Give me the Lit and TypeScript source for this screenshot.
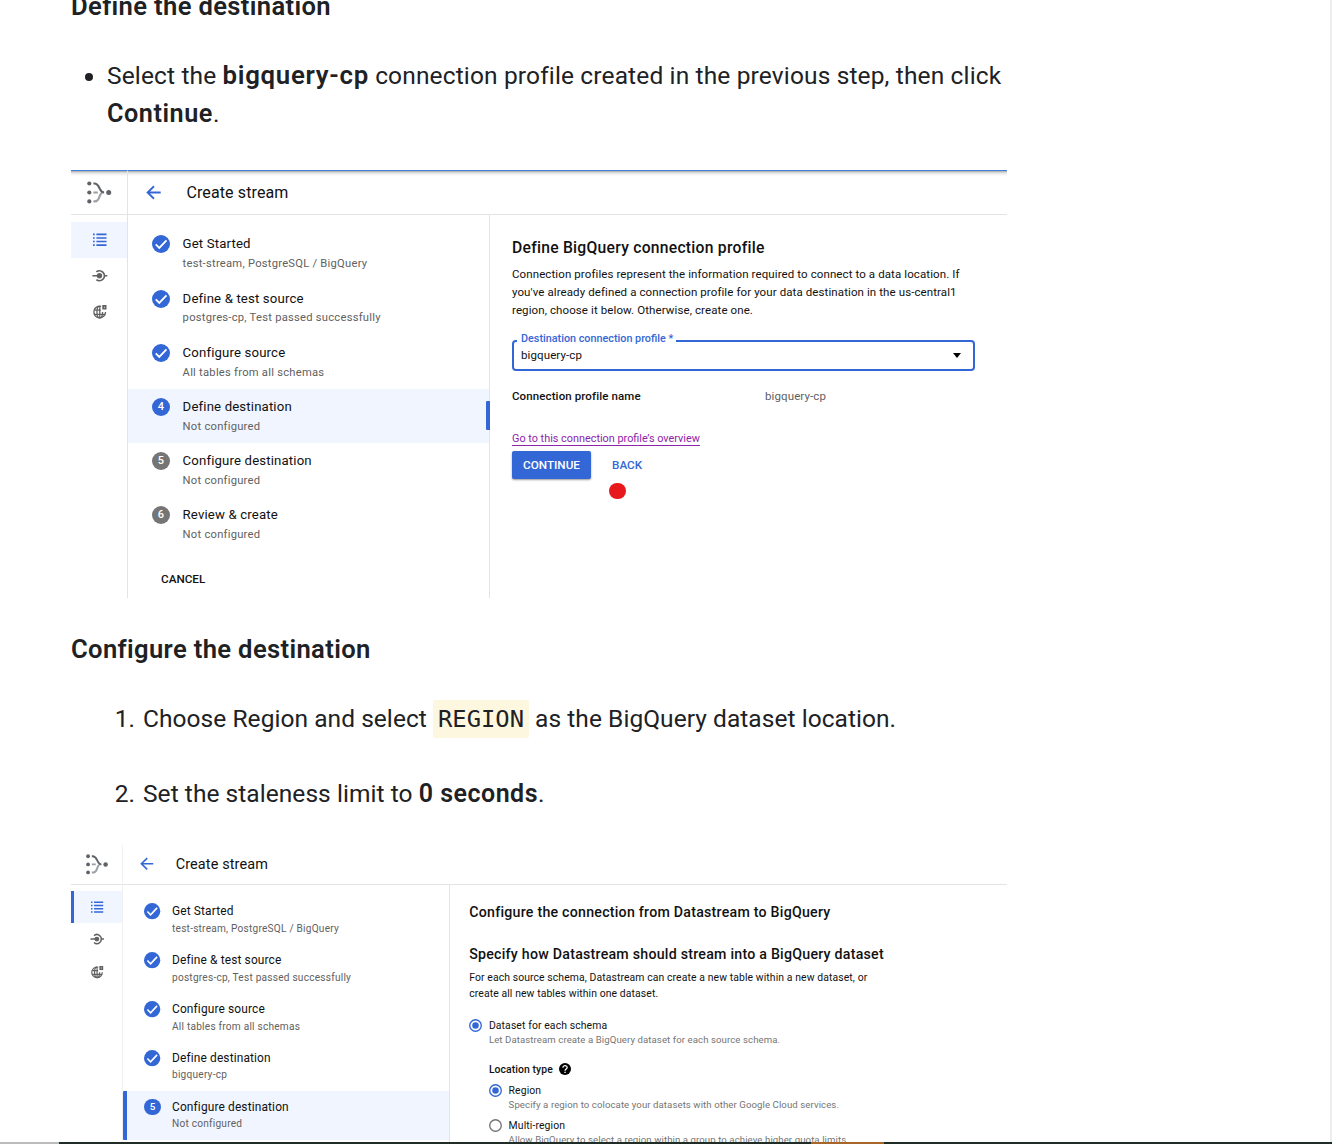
import { LitElement, html, css, svg, nothing } from "lit";
import { customElement, property } from "lit/decorators.js";
import { classMap } from "lit/directives/class-map.js";

interface Step {
  title: string;
  note: string;
  state: "done" | "active" | "todo";
}

@customElement("stream-icon")
class StreamIcon extends LitElement {
  @property() name = "";

  static styles = css`
    :host {
      display: block;
      line-height: 0;
    }
    .icon {
      display: block;
      width: 100%;
      height: 100%;
      overflow: visible;
    }
  `;

  private shape() {
    switch (this.name) {
      case "logo":
        return svg`
          <g fill="#5f6368">
            <circle cx="2.3" cy="2.5" r="2.1"/><circle cx="2.3" cy="11.5" r="2.1"/><circle cx="2.3" cy="20.4" r="2.1"/>
            <circle cx="21.7" cy="11.5" r="2.5"/>
          </g>
          <g fill="none" stroke-width="2.1">
            <path stroke="#9aa0a6" d="M6.4 20.4H8c3.4 0 4-3.4 5-6.2c.5-1.3 1-2.2 2.4-2.2M6.4 11.500h4.400"/>
            <path stroke="#5f6368" d="M6.400 2.500h1c3.600 0 4.400 3.500 5.800 6c.9 1.800 1.700 3 3.900 3"/>
          </g>`;
      case "back":
        return svg`<path fill="none" stroke="#3367d6" stroke-width="2.900" d="M23.500 12H2.500M12.800 2L2.500 12l10.300 10"/>`;
      case "list":
        return svg`<g fill="#3367d6">
          <path d="M0 1h3v2.800H0zM0 7.400h3v2.800H0zM0 13.800h3v2.800H0zM0 20.200h3V23H0zM6 1h18v2.800H6zM6 7.400h18v2.800H6zM6 13.800h18v2.800H6zM6 20.200h18V23H6z"/></g>`;
      case "plug":
        return svg`<g fill="none" stroke="#616161" stroke-width="3">
          <path d="M-1 12h10M20 12h5.500"/><path d="M6 5.200C9 2.400 14 2.400 17.400 5.400C21.400 9 21.400 15 17.400 18.600C14 21.600 9 21.600 6 18.800"/></g>
          <circle cx="11.500" cy="12" r="4.800" fill="#616161"/>`;
      case "globe":
        return svg`<g fill="none" stroke="#616161" stroke-width="2.300">
          <path d="M14.500 2.400A10.400 10.400 0 1 0 22.300 12.500"/>
          <path d="M12 2C9 2 7 6.500 7 12.500s2 10.500 5 10.500s5-4.500 5-10.500M2.300 9H14M2.300 16.500h19.500M12 2v21"/></g>
          <path fill="#616161" d="M16.500 0H24v8h-7.500z"/><path fill="#fff" d="M19.500 3h1.500v2h-1.500z"/>`;
      case "check":
        return svg`<circle cx="12" cy="12" r="12" fill="#3367d6"/>
          <path fill="none" stroke="#fff" stroke-width="2.400" d="M5 12.600l4.700 4.700L19.300 7.200"/>`;
      case "radio-on":
        return svg`<circle cx="12" cy="12" r="10.700" fill="none" stroke="#3367d6" stroke-width="2.500"/>
          <circle cx="12" cy="12" r="6" fill="#3367d6"/>`;
      case "radio-off":
        return svg`<circle cx="12" cy="12" r="10.700" fill="none" stroke="#757575" stroke-width="2.500"/>`;
      case "help":
        return svg`<circle cx="12" cy="12" r="12" fill="#000"/>
          <path fill="none" stroke="#fff" stroke-width="2.600" d="M7.800 9.400C7.800 3.800 16.400 4 16.300 9.200C16.200 12 12.100 12.300 12.100 15.600"/>
          <path fill="#fff" d="M10.700 17.400h2.800v2.700h-2.800z"/>`;
      default:
        return nothing;
    }
  }

  render() {
    const box = this.name === "logo" ? "0 0 25 23" : "0 0 24 24";
    return html`<svg class="icon" viewBox=${box}>${this.shape()}</svg>`;
  }
}

@customElement("stream-console")
class StreamConsole extends LitElement {
  @property({ type: Boolean, reflect: true }) compact = false;
  @property({ attribute: false }) steps: Step[] = [];

  static styles = css`
    :host {
      --u: 1px;
      display: grid;
      grid-template-columns: 57px minmax(0, 1fr);
      grid-template-rows: calc(44.500 * var(--u)) minmax(0, 1fr);
      font-family: Roboto, sans-serif;
      color: #111;
      background: #fff;
      overflow: hidden;
    }
    :host([compact]) {
      --u: 0.904px;
      grid-template-columns: 52px minmax(0, 1fr);
    }
    .corner,
    .bar {
      display: flex;
      align-items: center;
      border-bottom: 1px solid #e4e4e4;
      box-sizing: border-box;
    }
    .corner {
      padding-left: calc(16 * var(--u));
      border-right: 1px solid #e4e4e4;
    }
    :host([compact]) .corner {
      padding-left: 15.300px;
      border-right-color: #f1f1f1;
    }
    :host(:not([compact])) .corner,
    :host(:not([compact])) .bar {
      border-top: 1px solid #3f80d8;
      background: linear-gradient(#a8a8a8, #e6e6e6 2px, #fff 5px);
    }
    .logo {
      width: calc(25 * var(--u));
      height: calc(23 * var(--u));
    }
    .bar {
      padding-left: calc(18.400 * var(--u));
      gap: calc(25 * var(--u));
    }
    :host([compact]) .bar {
      padding-left: 16.500px;
    }
    .arrow {
      width: calc(15 * var(--u));
      height: calc(15 * var(--u));
    }
    .name {
      font-size: calc(16 * var(--u));
      letter-spacing: 0.120px;
    }
    .rail {
      border-right: 1px solid #e4e4e4;
      padding-top: calc(7.500 * var(--u));
    }
    :host([compact]) .rail {
      padding-top: 6px;
      border-right-color: #f1f1f1;
    }
    .tool {
      height: calc(36 * var(--u));
      display: flex;
      align-items: center;
      justify-content: center;
      padding-left: 1px;
    }
    .tool.on {
      background: #f0f5ff;
    }
    :host([compact]) .tool.on {
      border-left: 3px solid #3367d6;
      padding: 0 2px 0 0;
    }
    .glyph {
      width: calc(13.500 * var(--u));
      height: calc(13.500 * var(--u));
    }
    .body {
      display: grid;
      grid-template-columns: calc(362 * var(--u)) minmax(0, 1fr);
      min-height: 0;
    }
    .steps {
      border-right: 1px solid #e4e4e4;
      padding-top: calc(12 * var(--u));
    }
    :host([compact]) .steps {
      padding-top: 10px;
    }
    .step {
      display: flex;
      box-sizing: border-box;
      height: calc(54.200 * var(--u));
      padding: calc(8.900 * var(--u)) 0 0 calc(24 * var(--u));
      gap: calc(12.600 * var(--u));
    }
    :host([compact]) .step {
      padding-left: 21.400px;
    }
    .step.active {
      background: #f0f5ff;
      position: relative;
    }
    .step.active::after {
      content: "";
      position: absolute;
      right: -1px;
      top: 12px;
      width: 4px;
      height: 29px;
      border-radius: 1px 0 0 1px;
      background: #3367d6;
    }
    :host([compact]) .step.active::after {
      right: auto;
      left: 0;
      top: 0;
      height: 100%;
    }
    .mark {
      flex: none;
      width: calc(18 * var(--u));
      height: calc(18 * var(--u));
    }
    .disc {
      border-radius: 50%;
      color: #fff;
      background: #757575;
      font-size: calc(11 * var(--u));
      font-weight: 500;
      line-height: calc(18 * var(--u));
      text-align: center;
    }
    .active .disc {
      background: #3367d6;
    }
    .title {
      font-size: calc(13.200 * var(--u));
      line-height: calc(18 * var(--u));
      letter-spacing: calc(0.150 * var(--u));
      white-space: nowrap;
    }
    .note {
      font-size: calc(11.200 * var(--u));
      line-height: calc(16 * var(--u));
      margin-top: calc(2.800 * var(--u));
      letter-spacing: calc(0.250 * var(--u));
      color: #616161;
      white-space: nowrap;
    }
    .cancel {
      font-size: 11.700px;
      font-weight: 500;
      line-height: 16px;
      padding: 19px 0 0 33px;
    }
  `;

  private mark(step: Step, index: number) {
    return step.state === "done"
      ? html`<stream-icon class="mark" name="check"></stream-icon>`
      : html`<div class="mark disc">${index + 1}</div>`;
  }

  render() {
    return html`
      <div class="corner"><stream-icon class="logo" name="logo"></stream-icon></div>
      <div class="bar">
        <stream-icon class="arrow" name="back"></stream-icon>
        <span class="name">Create stream</span>
      </div>
      <div class="rail">
        ${["list", "plug", "globe"].map(
          (name, i) => html`<div class=${classMap({ tool: true, on: i === 0 })}>
            <stream-icon class="glyph" name=${name}></stream-icon>
          </div>`,
        )}
      </div>
      <div class="body">
        <div class="steps">
          ${this.steps.map(
            (step, i) => html`<div class=${classMap({ step: true, active: step.state === "active" })}>
              ${this.mark(step, i)}
              <div>
                <div class="title">${step.title}</div>
                <div class="note">${step.note}</div>
              </div>
            </div>`,
          )}
          ${this.compact ? nothing : html`<div class="cancel">CANCEL</div>`}
        </div>
        <slot></slot>
      </div>
    `;
  }
}

@customElement("app-root")
class AppRoot extends LitElement {
  static styles = css`
    :host {
      display: grid;
      grid-template: 1142px 2px / minmax(0, 1fr) 2px;
      height: 1144px;
      overflow: hidden;
      background: #fff;
      color: #202124;
      font-family: Roboto, sans-serif;
      white-space: nowrap;
    }
    .page {
      overflow: hidden;
      padding-left: 71px;
    }
    .gutter {
      background: #ededed;
    }
    .taskbar {
      grid-column: 1 / -1;
      display: grid;
      grid-template-columns: 59px 752px 73px 1fr;
      background: #202c26;
    }
    .grey {
      background: #bcbcbc;
    }
    .amber {
      grid-column: 3;
      background: #a8652a;
    }
    .heading {
      font-size: 25.600px;
      font-weight: 600;
      line-height: 38px;
      letter-spacing: 0.350px;
      margin: 0;
    }
    .first {
      margin-top: -13px;
    }
    .copy {
      font-size: 24.500px;
      line-height: 38px;
      letter-spacing: 0.140px;
      margin: 0;
      padding: 0;
      list-style: none;
    }
    .bullets {
      margin-top: 32px;
    }
    .bullet {
      display: grid;
      grid-template-columns: 36px 1fr;
      align-items: start;
    }
    .dot {
      width: 8px;
      height: 8px;
      border-radius: 50%;
      background: #202124;
      margin: 16px 0 0 14px;
    }
    .strong {
      font-size: 25.200px;
      font-weight: 600;
      letter-spacing: 0.550px;
      line-height: 1;
    }
    .wide {
      font-size: 25.800px;
      letter-spacing: 0.720px;
    }
    .shot {
      width: 936px;
    }
    .shot-a {
      height: 428px;
      margin-top: 37px;
    }
    .shot-b {
      height: 298px;
      margin-top: 32px;
    }
    .second {
      margin-top: 31.500px;
    }
    .numbered {
      display: grid;
      grid-template-columns: 64px 1fr;
      column-gap: 8px;
      row-gap: 37px;
      margin-top: 32px;
      letter-spacing: 0.050px;
    }
    .numbered .strong {
      font-size: 25px;
      letter-spacing: 0.500px;
    }
    .num {
      text-align: right;
    }
    .code {
      display: inline-block;
      height: 38px;
      padding: 0 5px;
      border-radius: 2px;
      background: #fef7e0;
      font-family: "DejaVu Sans Mono", "Liberation Mono", monospace;
      font-size: 23.800px;
      letter-spacing: 0;
      vertical-align: top;
    }
    .panel {
      color: #111;
      padding-left: 22px;
    }
    .panel-b {
      padding-left: 19px;
    }
    .h {
      font-weight: 500;
      font-size: 15.700px;
      letter-spacing: 0.250px;
      line-height: 20px;
      padding-top: 23px;
    }
    .p {
      font-size: 11.500px;
      letter-spacing: 0.100px;
      line-height: 18px;
      margin-top: 7.500px;
    }
    .select {
      position: relative;
      display: flex;
      align-items: center;
      justify-content: space-between;
      box-sizing: border-box;
      width: 463px;
      height: 31px;
      margin-top: 21px;
      padding: 0 12px 1px 7px;
      border: 2px solid #3367d6;
      border-radius: 4px;
      font-size: 11.500px;
      letter-spacing: 0.110px;
    }
    .legend {
      position: absolute;
      left: 3px;
      top: -10px;
      padding: 0 3px 0 4px;
      background: #fff;
      color: #3367d6;
      font-size: 10.800px;
      font-weight: 500;
      line-height: 14px;
      letter-spacing: 0;
    }
    .caret {
      border: 4.500px solid transparent;
      border-top: 5px solid #000;
      border-bottom: 0;
    }
    .pair {
      display: grid;
      grid-template-columns: 253px 1fr;
      margin-top: 16px;
      font-size: 11.500px;
      letter-spacing: 0.110px;
      line-height: 18px;
    }
    .key {
      font-weight: 500;
    }
    .value {
      color: #616161;
    }
    .link {
      display: inline-block;
      margin-top: 27px;
      font-size: 10.860px;
      line-height: 13px;
      color: #8e24aa;
      border-bottom: 1px solid #8e24aa;
    }
    .actions {
      position: relative;
      display: flex;
      align-items: center;
      gap: 21px;
      margin-top: 4.500px;
      font-size: 11.700px;
      font-weight: 500;
      color: #3367d6;
    }
    .primary {
      width: 79px;
      height: 28.500px;
      line-height: 28.500px;
      text-align: center;
      border-radius: 2px;
      background: #3367d6;
      color: #fff;
      box-shadow: 0 1px 2px rgba(0, 0, 0, 0.4);
    }
    .pointer {
      position: absolute;
      left: 97px;
      top: 32px;
      width: 16.500px;
      height: 16.500px;
      border-radius: 50%;
      background: #e8191c;
    }
    .h2 {
      font-weight: 500;
      font-size: 14.200px;
      letter-spacing: 0.240px;
      line-height: 20px;
      padding-top: 17px;
    }
    .h2 + .h2 {
      padding-top: 22px;
    }
    .p2 {
      font-size: 10.400px;
      letter-spacing: 0.100px;
      line-height: 16px;
      margin-top: 6.500px;
    }
    .option {
      display: grid;
      grid-template-columns: 13px 1fr;
      column-gap: 6.700px;
      font-size: 10.400px;
      letter-spacing: 0.110px;
      line-height: 15px;
    }
    .radio {
      width: 13px;
      height: 13px;
      margin-top: 1px;
    }
    .hint {
      grid-column: 2;
      font-size: 9.600px;
      letter-spacing: 0.090px;
      line-height: 14.500px;
      color: #757575;
    }
    .nested {
      padding-left: 19.700px;
    }
    .top-option {
      margin-top: 15.500px;
    }
    .location {
      display: flex;
      align-items: center;
      gap: 6.500px;
      margin-top: 14.500px;
      font-size: 10.400px;
      font-weight: 500;
      letter-spacing: 0.080px;
      line-height: 15px;
    }
    .help {
      width: 12px;
      height: 12px;
    }
    .region {
      margin-top: 6.500px;
    }
    .multi {
      margin-top: 5px;
    }
  `;

  private readonly first: Step[] = [
    { title: "Get Started", note: "test-stream, PostgreSQL / BigQuery", state: "done" },
    { title: "Define & test source", note: "postgres-cp, Test passed successfully", state: "done" },
    { title: "Configure source", note: "All tables from all schemas", state: "done" },
    { title: "Define destination", note: "Not configured", state: "active" },
    { title: "Configure destination", note: "Not configured", state: "todo" },
    { title: "Review & create", note: "Not configured", state: "todo" },
  ];

  private readonly second: Step[] = [
    ...this.first.slice(0, 3),
    { title: "Define destination", note: "bigquery-cp", state: "done" },
    { title: "Configure destination", note: "Not configured", state: "active" },
  ];

  private option(cls: string, icon: string, label: string, hint: string) {
    return html`<div class="option ${cls}">
      <stream-icon class="radio" name=${icon}></stream-icon>
      <div>${label}</div>
      <div class="hint">${hint}</div>
    </div>`;
  }

  render() {
    return html`
      <main class="page">
        <h3 class="heading first">Define the destination</h3>
        <ul class="copy bullets">
          <li class="bullet">
            <span class="dot"></span>
            <div>
              <div>Select the <b class="strong wide">bigquery-cp</b> connection profile created in the previous step, then click</div>
              <div><b class="strong">Continue</b>.</div>
            </div>
          </li>
        </ul>

        <stream-console class="shot shot-a" .steps=${this.first}>
          <section class="panel">
            <div class="h">Define BigQuery connection profile</div>
            <div class="p">
              Connection profiles represent the information required to connect to a data location. If<br />
              you've already defined a connection profile for your data destination in the us-central1<br />
              region, choose it below. Otherwise, create one.
            </div>
            <div class="select">
              <span class="legend">Destination connection profile *</span>
              <span>bigquery-cp</span>
              <span class="caret"></span>
            </div>
            <div class="pair">
              <span class="key">Connection profile name</span>
              <span class="value">bigquery-cp</span>
            </div>
            <div class="link">Go to this connection profile’s overview</div>
            <div class="actions">
              <div class="primary">CONTINUE</div>
              <div>BACK</div>
              <div class="pointer"></div>
            </div>
          </section>
        </stream-console>

        <h3 class="heading second">Configure the destination</h3>
        <div class="copy numbered">
          <span class="num">1.</span>
          <div>Choose Region and select <code class="code">REGION</code> as the BigQuery dataset location.</div>
          <span class="num">2.</span>
          <div>Set the staleness limit to <b class="strong">0 seconds</b>.</div>
        </div>

        <stream-console class="shot shot-b" compact .steps=${this.second}>
          <section class="panel panel-b">
            <div class="h2">Configure the connection from Datastream to BigQuery</div>
            <div class="h2">Specify how Datastream should stream into a BigQuery dataset</div>
            <div class="p2">
              For each source schema, Datastream can create a new table within a new dataset, or<br />
              create all new tables within one dataset.
            </div>
            ${this.option("top-option", "radio-on", "Dataset for each schema", "Let Datastream create a BigQuery dataset for each source schema.")}
            <div class="nested">
              <div class="location">Location type <stream-icon class="help" name="help"></stream-icon></div>
              ${this.option("region", "radio-on", "Region", "Specify a region to colocate your datasets with other Google Cloud services.")}
              ${this.option("multi", "radio-off", "Multi-region", "Allow BigQuery to select a region within a group to achieve higher quota limits.")}
            </div>
          </section>
        </stream-console>
      </main>
      <div class="gutter"></div>
      <div class="taskbar"><span class="grey"></span><span class="amber"></span></div>
    `;
  }
}
